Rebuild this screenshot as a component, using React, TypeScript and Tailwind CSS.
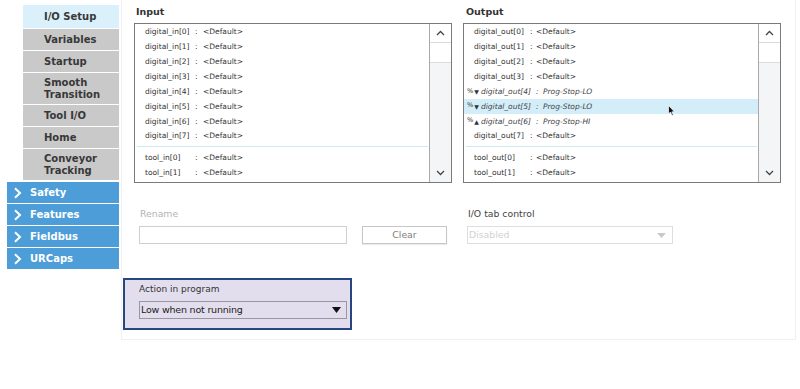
import React from "react";

const font = { fontFamily: '"DejaVu Sans", "Liberation Sans", sans-serif' };

const setupItems = [
  { label: "I/O Setup", h: "h-[23px]", active: true },
  { label: "Variables", h: "h-[21px]" },
  { label: "Startup", h: "h-[21px]" },
  { label: "Smooth\nTransition", h: "h-[31px]" },
  { label: "Tool I/O", h: "h-[21px]" },
  { label: "Home", h: "h-[21px]" },
  { label: "Conveyor\nTracking", h: "h-[31px]" },
];

const groups = ["Safety", "Features", "Fieldbus", "URCaps"];

type Row = { name: string; value: string; prefix?: string; italic?: boolean; selected?: boolean };

const inputRows: Row[] = Array.from({ length: 8 }, (_, i) => ({ name: `digital_in[${i}]`, value: "<Default>" }));
const inputTools: Row[] = [0, 1].map((i) => ({ name: `tool_in[${i}]`, value: "<Default>" }));

const outputRows: Row[] = [
  { name: "digital_out[0]", value: "<Default>" },
  { name: "digital_out[1]", value: "<Default>" },
  { name: "digital_out[2]", value: "<Default>" },
  { name: "digital_out[3]", value: "<Default>" },
  { name: "digital_out[4]", value: "Prog-Stop-LO", prefix: "▼", italic: true },
  { name: "digital_out[5]", value: "Prog-Stop-LO", prefix: "▼", italic: true, selected: true },
  { name: "digital_out[6]", value: "Prog-Stop-HI", prefix: "▲", italic: true },
  { name: "digital_out[7]", value: "<Default>" },
];
const outputTools: Row[] = [0, 1].map((i) => ({ name: `tool_out[${i}]`, value: "<Default>" }));

function Chevron({ up }: { up?: boolean }) {
  return (
    <svg width="9" height="6" viewBox="0 0 9 6">
      <polyline
        points={up ? "1,5 4.5,1.5 8,5" : "1,1 4.5,4.5 8,1"}
        fill="none"
        stroke="#444"
        strokeWidth="1.3"
      />
    </svg>
  );
}

function ListRow({ row, nameW, out }: { row: Row; nameW: string; out?: boolean }) {
  if (row.italic) {
    return (
      <div
        className={`h-[14.86px] flex items-center pl-[3px] text-[7.5px] text-[#444] whitespace-nowrap ${
          row.selected ? "bg-[#d3edf9]" : ""
        }`}
      >
        <span className="w-[14px] flex items-center text-[#333]">
          <span className="text-[6.5px]">%</span>
          <span className="text-[6px] ml-[1px]">{row.prefix}</span>
        </span>
        <span className="w-[55px] italic">{row.name}</span>
        <span className="w-[7px] italic">:</span>
        <span className="italic">{row.value}</span>
      </div>
    );
  }
  return (
    <div className="h-[14.86px] flex items-center pl-[10px] text-[7.5px] text-[#333] whitespace-nowrap">
      <span className={nameW}>{row.name}</span>
      <span className={out ? "w-[6px]" : "w-[8px]"}>:</span>
      <span>{row.value}</span>
    </div>
  );
}

function ListBox({ rows, tools, nameW, out }: { rows: Row[]; tools: Row[]; nameW: string; out?: boolean }) {
  return (
    <div className="h-[160px] border border-[#7a7a7a] bg-white flex">
      <div className="flex-1 flex flex-col pt-[0.6px]">
        {rows.map((r) => (
          <ListRow key={r.name} row={r} nameW={nameW} out={out} />
        ))}
        <div className="h-[7px] flex items-center pl-[2px] pr-[1px]">
          <div className="h-px w-full bg-[#cdebf2]" />
        </div>
        {tools.map((r) => (
          <ListRow key={r.name} row={r} nameW={nameW} out={out} />
        ))}
      </div>
      <div className="w-[22px] border-l border-[#a9a9a9] flex flex-col bg-[#f3f5f6]">
        <div className="h-[19px] bg-white border-b border-[#dcdcdc] flex items-center justify-center">
          <Chevron up />
        </div>
        <div className="h-[20px] bg-white border-b border-[#dcdcdc]" />
        <div className="flex-1" />
        <div className="h-[19px] flex items-center justify-center">
          <Chevron />
        </div>
      </div>
    </div>
  );
}

export default function App() {
  return (
    <div className="w-[800px] h-[389px] bg-white flex overflow-hidden relative" style={font}>
      <div className="w-[121px] shrink-0 pt-[5px] pl-[7px] flex flex-col">
        <div className="flex flex-col gap-[1px]">
          {setupItems.map((it) => (
            <div
              key={it.label}
              className={`${it.h} ml-[16px] w-[96px] flex items-center pl-[21px] text-[10px] leading-[12px] font-bold text-[#383838] whitespace-pre ${
                it.active ? "bg-[#daf1fb]" : "bg-[#c9c9c9]"
              }`}
            >
              {it.label}
            </div>
          ))}
        </div>
        <div className="flex flex-col gap-[1px] mt-[2px]">
          {groups.map((g) => (
            <div key={g} className="h-[21px] w-[112px] bg-[#4c9dd8] flex items-center pl-[6px] text-[10px] font-bold text-white">
              <svg width="9" height="12" viewBox="0 0 9 12" className="mr-[8px]">
                <polyline points="2,1.2 7,6 2,10.8" fill="none" stroke="white" strokeWidth="2" />
              </svg>
              {g}
            </div>
          ))}
        </div>
      </div>

      <div className="w-[675px] h-[340px] border-l border-r border-b border-[#f1f1f1] flex flex-col">
        <div className="h-[23px] grid grid-cols-[318px_318px] gap-x-[11px] pl-[12px] pt-[2px] items-center text-[9.5px] font-bold text-[#333]">
          <span className="pl-[2px]">Input</span>
          <span className="pl-[3px]">Output</span>
        </div>
        <div className="grid grid-cols-[318px_318px] gap-x-[11px] pl-[12px]">
          <ListBox rows={inputRows} tools={inputTools} nameW="w-[50px]" />
          <ListBox rows={outputRows} tools={outputTools} nameW="w-[56px]" out />
        </div>

        <div className="mt-[25px] flex pl-[17px] text-[9.3px]">
          <div className="w-[208px] flex flex-col">
            <span className="h-[12px] leading-[12px] pl-[1px] text-[#b3b3b3]">Rename</span>
            <div className="mt-[6px] h-[18px] border border-[#cfcfcf] bg-white" />
          </div>
          <div className="ml-[15px] w-[85px] flex flex-col">
            <span className="h-[12px]" />
            <button className="mt-[6px] h-[18px] border border-[#c6c6c6] bg-white text-[#808080] shadow-[0_1px_1px_rgba(0,0,0,0.08)] flex items-center justify-center">
              Clear
            </button>
          </div>
          <div className="ml-[20px] w-[206px] flex flex-col">
            <span className="h-[12px] leading-[12px] pl-[1px] text-[#444]">I/O tab control</span>
            <div className="mt-[6px] h-[18px] border border-[#dedede] bg-white flex items-center justify-between pl-[1px] pr-[6px]">
              <span className="text-[#d2d2d2]">Disabled</span>
              <svg width="9" height="5" viewBox="0 0 9 5">
                <polygon points="0,0 9,0 4.5,5" fill="#c9c9c9" />
              </svg>
            </div>
          </div>
        </div>

        <div className="mt-[34px] ml-[1px] w-[229px] h-[52px] border-2 border-[#27467f] bg-[#e3deed] pl-[14px] pt-[3px] flex flex-col">
          <span className="h-[12px] leading-[12px] text-[9px] text-[#333]">Action in program</span>
          <div className="mt-[6px] w-[208px] h-[18px] border border-[#9a97a2] flex items-center justify-between pl-[1px] pr-[5px]">
            <span className="text-[9.5px] text-[#222] tracking-[-0.2px]">Low when not running</span>
            <svg width="9" height="6" viewBox="0 0 9 6">
              <polygon points="0,0 9,0 4.5,6" fill="#111" />
            </svg>
          </div>
        </div>
      </div>

      <svg className="absolute left-[668px] top-[105px]" width="7" height="11" viewBox="0 0 7 11">
        <polygon points="0.5,0.5 0.5,9 2.5,7 4,10.5 5.3,10 3.9,6.8 6.5,6.8" fill="#111" stroke="white" strokeWidth="0.7" />
      </svg>
    </div>
  );
}
